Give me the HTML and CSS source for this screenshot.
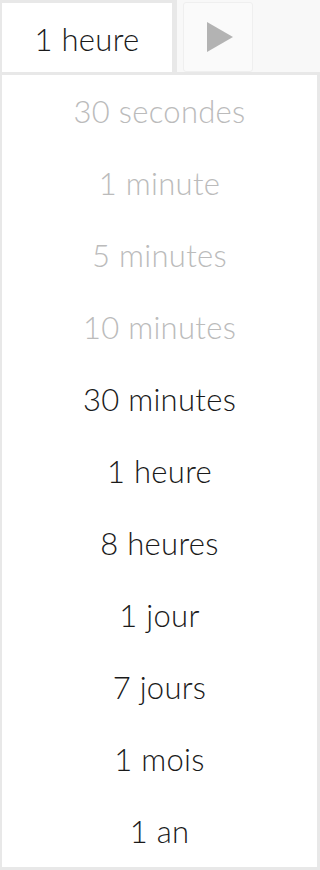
FILE: index.html
```html
<!DOCTYPE html>
<html lang="fr">
<head>
    <meta charset="UTF-8">
    <meta name="viewport" content="width=device-width, initial-scale=1.0">
    <title>Intervalle</title>
    <link rel="stylesheet" href="styles.css">
</head>
<body>
    <div class="bar">
        <div class="select">1 heure</div>
        <div class="play">
            <svg width="26" height="30" viewBox="0 0 26 30"><polygon points="0,0 26,15 0,30" fill="#b3b3b3"/></svg>
        </div>
    </div>
    <ul class="list">
        <li class="off">30 secondes</li>
        <li class="off">1 minute</li>
        <li class="off">5 minutes</li>
        <li class="off">10 minutes</li>
        <li>30 minutes</li>
        <li>1 heure</li>
        <li>8 heures</li>
        <li>1 jour</li>
        <li>7 jours</li>
        <li>1 mois</li>
        <li>1 an</li>
    </ul>
</body>
</html>
```

FILE: styles.css
```css
body{margin:0; background:#f8f8f8; font-family:Lato, "Noto Sans", sans-serif; font-weight:300; color:#1a1a1a;}
.bar{display:flex; align-items:flex-start; height:72px;}
.select{box-sizing:border-box; width:177px; height:72px; padding-top:3px; border:solid #e8e8e8; border-width:3px 5px 0 2px; background:#fff; display:flex; align-items:center; justify-content:center; font-size:31px; letter-spacing:0.3px;}
.play{box-sizing:border-box; width:70px; height:70px; margin:2px 0 0 6px; border:1px solid #efefef; border-radius:3px; background:#fafafa; display:flex; align-items:center; justify-content:center; padding-left:4px;}
.list{list-style:none; margin:0; padding:0; border:3px solid #e8e8e8; border-left-width:2px; background:#fff;}
.list li{height:72px; display:flex; align-items:center; justify-content:center; font-size:31px; letter-spacing:0.3px;}
.list .off{color:#bbb;}
```
